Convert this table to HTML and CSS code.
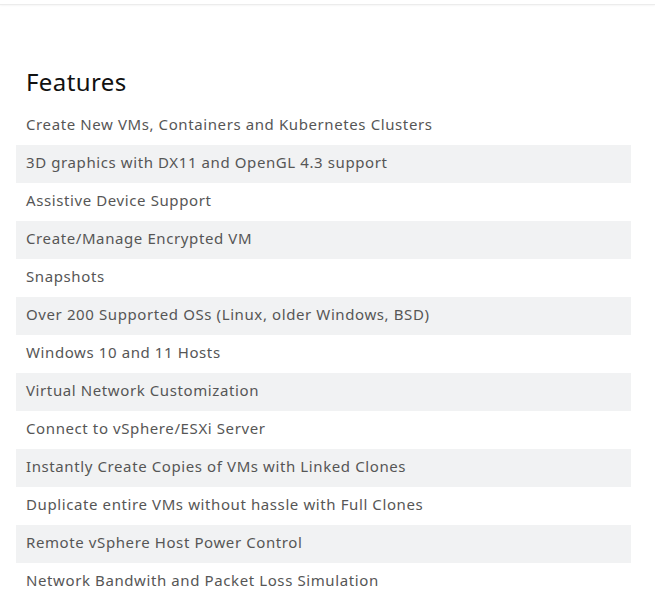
FILE: index.html
```html
<!DOCTYPE html>
<html>
<head>
<meta charset="utf-8">
<link rel="stylesheet" href="styles.css">
</head>
<body>
<div class="topbar"></div>
<section class="features">
  <h2 class="title">Features</h2>
  <ul class="list">
    <li class="row">Create New VMs, Containers and Kubernetes Clusters</li>
    <li class="row alt">3D graphics with DX11 and OpenGL 4.3 support</li>
    <li class="row">Assistive Device Support</li>
    <li class="row alt">Create/Manage Encrypted VM</li>
    <li class="row">Snapshots</li>
    <li class="row alt">Over 200 Supported OSs (Linux, older Windows, BSD)</li>
    <li class="row">Windows 10 and 11 Hosts</li>
    <li class="row alt">Virtual Network Customization</li>
    <li class="row">Connect to vSphere/ESXi Server</li>
    <li class="row alt">Instantly Create Copies of VMs with Linked Clones</li>
    <li class="row">Duplicate entire VMs without hassle with Full Clones</li>
    <li class="row alt">Remote vSphere Host Power Control</li>
    <li class="row">Network Bandwith and Packet Loss Simulation</li>
  </ul>
</section>
</body>
</html>
```
FILE: styles.css
```css
html, body {
  margin: 0;
  padding: 0;
  background: #ffffff;
}
body {
  font-family: "Noto Sans", "Open Sans", sans-serif;
}
.topbar {
  height: 4px;
  background: #ffffff;
  border-bottom: 1px solid #ececec;
  box-shadow: 0 1px 2px rgba(0,0,0,0.04);
}
.features {
  padding: 0 24px 0 16px;
}
.title {
  margin: 55px 0 4px 10px;
  font-size: 24px;
  font-weight: 400;
  line-height: 43px;
  letter-spacing: 0.4px;
  color: #111111;
}
.list {
  list-style: none;
  margin: 0;
  padding: 0;
}
.row {
  box-sizing: border-box;
  height: 38px;
  line-height: 35px;
  padding: 0 10px;
  font-size: 15px;
  letter-spacing: 0.6px;
  color: #565656;
}
.row.alt {
  background: #f1f2f3;
}
```
